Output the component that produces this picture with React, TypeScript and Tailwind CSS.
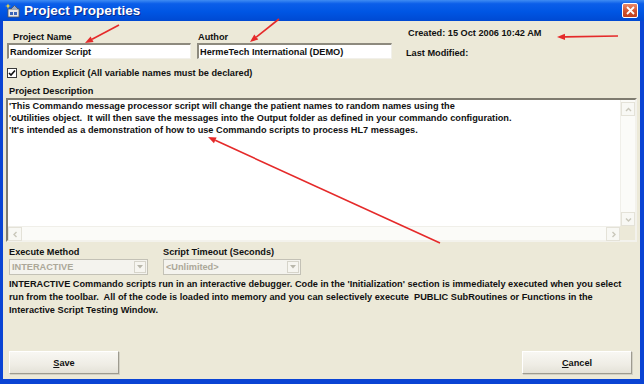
import React from "react";

type ArrowProps = { x1: number; y1: number; x2: number; y2: number };

// red annotation arrow drawn on top of the dialog
const Arrow = ({ x1, y1, x2, y2 }: ArrowProps) => {
  const a = Math.atan2(y2 - y1, x2 - x1);
  const len = 8;
  const half = 3.2;
  const bx = x2 - len * Math.cos(a);
  const by = y2 - len * Math.sin(a);
  const px = -Math.sin(a) * half;
  const py = Math.cos(a) * half;
  return (
    <g>
      <line x1={x1} y1={y1} x2={bx} y2={by} stroke="#e52a2a" strokeWidth="1.6" />
      <polygon
        points={`${x2},${y2} ${bx + px},${by + py} ${bx - px},${by - py}`}
        fill="#e52a2a"
      />
    </g>
  );
};

const Chevron = ({ dir }: { dir: "up" | "down" | "left" | "right" }) => {
  const d = {
    up: "M1 5 L3.5 2.5 L6 5",
    down: "M1 2.5 L3.5 5 L6 2.5",
    left: "M4.5 1 L2 3.5 L4.5 6",
    right: "M2.5 1 L5 3.5 L2.5 6",
  }[dir];
  return (
    <div className="w-[14px] h-[14px] border border-[#e4e2d8] bg-[#f8f8f4] flex items-center justify-center">
      <svg width="7" height="7" viewBox="0 0 7 7">
        <path d={d} fill="none" stroke="#c9c7ba" strokeWidth="1.4" />
      </svg>
    </div>
  );
};

const TextBox = ({ value }: { value: string }) => (
  <div className="h-[16px] bg-white border-t-2 border-l-2 border-r border-b border-t-[#8d8a7e] border-l-[#8d8a7e] border-r-[#f1f0ea] border-b-[#f1f0ea] flex items-center pl-[1px] leading-[12px]">
    {value}
  </div>
);

const Combo = ({ value, width }: { value: string; width: string }) => (
  <div
    className={`${width} h-[16px] border border-[#c3c1b6] bg-[#f4f3ee] flex items-center justify-between pl-[2px] pr-[1px] text-[#aca899]`}
  >
    <span className="leading-[12px]">{value}</span>
    <div className="w-[12px] h-[12px] border border-[#d6d4ca] bg-[#f6f5f0] flex items-center justify-center">
      <svg width="6" height="4" viewBox="0 0 6 4">
        <path d="M0 0 H6 L3 3.5 Z" fill="#b9b7ab" />
      </svg>
    </div>
  </div>
);

const Button = ({ label }: { label: string }) => (
  <div className="w-[110px] h-[23px] border border-t-white border-l-white border-r-[#9e9b8f] border-b-[#9e9b8f] bg-[linear-gradient(180deg,#f8f7f3_0%,#efede5_60%,#e4e2d8_100%)] flex items-center justify-center shadow-[1px_1px_0_#d2d0c4]">
    <span className="leading-[12px]">
      <span className="underline">{label[0]}</span>
      {label.slice(1)}
    </span>
  </div>
);

export default function App() {
  return (
    <div className="relative w-[644px] h-[384px] flex flex-col bg-[#0a44d4] font-['Liberation_Sans',Arial,sans-serif] font-bold text-[9.2px] text-[#111]">
      {/* title bar */}
      <div className="h-[21px] flex items-center bg-[linear-gradient(180deg,#3f8cf3_0%,#0b5ee9_18%,#0056e4_55%,#0049d2_100%)] pl-[5px]">
        <svg width="15" height="15" viewBox="0 0 15 15">
          <rect x="3" y="6" width="11" height="8" fill="#e8e8e8" stroke="#555" strokeWidth="0.8" />
          <rect x="5" y="9" width="3" height="3" fill="#3a64b8" />
          <rect x="9" y="9" width="3" height="3" fill="#3a64b8" />
          <path d="M6 6 L9.5 2.5 L13 6" fill="#9aa9c6" stroke="#555" strokeWidth="0.8" />
          <path d="M3 0.5 L3.8 2.6 L6 3 L3.8 3.6 L3 6 L2.2 3.6 L0 3 L2.2 2.6 Z" fill="#ffe23a" />
        </svg>
        <span className="ml-[4px] text-white text-[13.5px] leading-[16px] [text-shadow:1px_1px_0_#0a2a8a]">
          Project Properties
        </span>
        <div className="ml-auto mr-[6px] w-[16px] h-[15px] rounded-[2px] border border-white bg-[linear-gradient(180deg,#ea8a6a_0%,#d2532e_55%,#c04020_100%)] flex items-center justify-center">
          <svg width="9" height="9" viewBox="0 0 9 9">
            <path d="M1 1 L8 8 M8 1 L1 8" stroke="white" strokeWidth="1.8" />
          </svg>
        </div>
      </div>

      {/* dialog body */}
      <div className="flex-1 ml-[3px] mr-[4px] mb-[5px] bg-[#ece9d8] flex flex-col">
        <div className="flex items-start pt-[10px]">
          <div className="ml-[4px] w-[184px]">
            <div className="pl-[6px] leading-[12px]">Project Name</div>
            <TextBox value="Randomizer Script" />
          </div>
          <div className="ml-[6px] w-[195px]">
            <div className="pl-[1px] leading-[12px]">Author</div>
            <TextBox value="HermeTech International (DEMO)" />
          </div>
          <div className="ml-[14px] -mt-[4px] leading-[12px]">
            <div className="pl-[2px]">Created: 15 Oct 2006 10:42 AM</div>
            <div className="mt-[8px]">Last Modified:</div>
          </div>
        </div>

        <div className="mt-[8px] ml-[4px] h-[12px] flex items-center gap-[3px]">
          <div className="w-[10px] h-[10px] border border-[#3a3a3a] bg-white flex items-center justify-center">
            <svg width="8" height="8" viewBox="0 0 8 8">
              <path d="M1 4 L3 6 L7 1.5" fill="none" stroke="#111" strokeWidth="1.6" />
            </svg>
          </div>
          <span className="leading-[12px]">
            Option Explicit (All variable names must be declared)
          </span>
        </div>

        <div className="mt-[6px] ml-[6px] leading-[12px]">Project Description</div>

        <div className="mt-[1px] ml-[3px] w-[631px] h-[144px] border-2 border-t-[#7e7b6f] border-l-[#7e7b6f] border-r-[#f3f2ec] border-b-[#f3f2ec] bg-white flex flex-col">
          <div className="flex-1 flex min-h-0">
            <div className="flex-1 pl-[1px] leading-[12px]">
              <div>
                'This Commando message processor script will change the patient names to random names using the
              </div>
              <div>
                'oUtilities object.&nbsp; It will then save the messages into the Output folder as defined in your commando configuration.
              </div>
              <div>'It's intended as a demonstration of how to use Commando scripts to process HL7 messages.</div>
            </div>
            <div className="w-[15px] bg-[#fbfbf8] border-l border-[#f0efe9] flex flex-col justify-between pt-[2px]">
              <Chevron dir="up" />
              <Chevron dir="down" />
            </div>
          </div>
          <div className="h-[14px] flex">
            <div className="flex-1 bg-[#fbfbf8] border-t border-[#f0efe9] flex justify-between">
              <Chevron dir="left" />
              <Chevron dir="right" />
            </div>
            <div className="w-[15px] bg-[#ece9d8]" />
          </div>
        </div>

        <div className="mt-[4px] flex leading-[12px]">
          <div className="ml-[6px] w-[139px]">Execute Method</div>
          <div className="ml-[15px]">Script Timeout (Seconds)</div>
        </div>
        <div className="mt-[1px] flex">
          <div className="ml-[6px]">
            <Combo value="INTERACTIVE" width="w-[139px]" />
          </div>
          <div className="ml-[15px]">
            <Combo value="<Unlimited>" width="w-[138px]" />
          </div>
        </div>

        <div className="mt-[3px] ml-[6px] leading-[13px]">
          <div>
            INTERACTIVE Commando scripts run in an interactive debugger. Code in the 'Initialization' section is immediately executed when you select
          </div>
          <div>
            run from the toolbar.&nbsp; All of the code is loaded into memory and you can selectively execute&nbsp; PUBLIC SubRoutines or Functions in the
          </div>
          <div>Interactive Script Testing Window.</div>
        </div>

        <div className="mt-auto flex justify-between pl-[6px] pr-[8px] pb-[5px]">
          <Button label="Save" />
          <Button label="Cancel" />
        </div>
      </div>

      {/* annotation arrows */}
      <svg className="absolute inset-0 pointer-events-none" width="644" height="384">
        <Arrow x1={119} y1={25} x2={85} y2={43} />
        <Arrow x1={279} y1={19} x2={250} y2={42} />
        <Arrow x1={618} y1={36} x2={557} y2={37} />
        <Arrow x1={440} y1={243} x2={208} y2={137} />
      </svg>
    </div>
  );
}
